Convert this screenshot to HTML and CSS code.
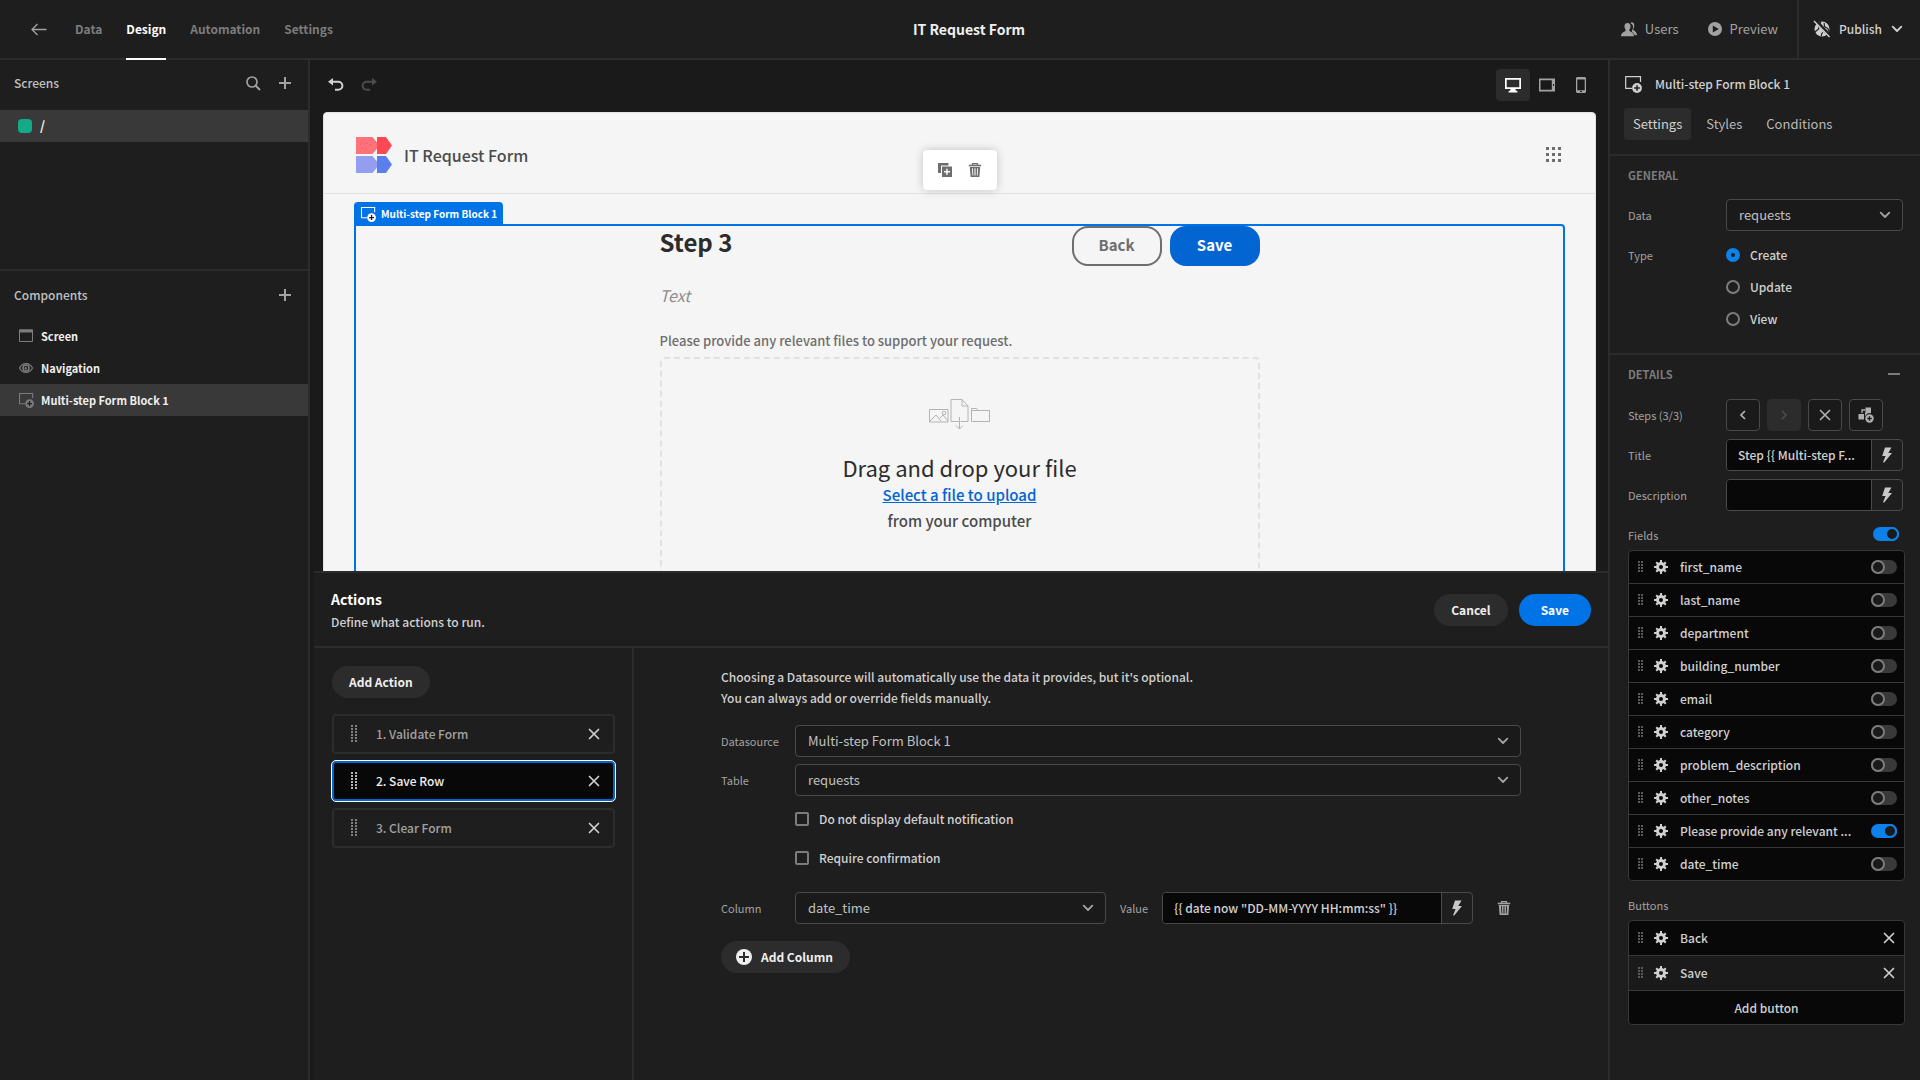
FILE: index.html
```html
<!DOCTYPE html>
<html lang="en">
<head>
<meta charset="utf-8">
<meta name="viewport" content="width=device-width, initial-scale=1">
<title>IT Request Form</title>
<link rel="stylesheet" href="styles.css">
</head>
<body>
<svg class="sprite" aria-hidden="true">
  <symbol id="i-plus" viewBox="0 0 12 12"><path d="M6 0v12M0 6h12" fill="none" stroke="currentColor" stroke-width="2"/></symbol>
  <symbol id="i-cross" viewBox="0 0 12 12"><path d="M1.500 1.500l9 9M10.500 1.500l-9 9" fill="none" stroke="currentColor" stroke-width="1.700" stroke-linecap="round"/></symbol>
  <symbol id="i-chevron" viewBox="0 0 12 8"><path d="M1.700 1.700L6 6l4.300-4.300" fill="none" stroke="currentColor" stroke-width="1.800" stroke-linecap="round" stroke-linejoin="round"/></symbol>
  <symbol id="i-block" viewBox="0 0 18 18"><path d="M8 13.300H1.700V1.600h14.800V7" fill="none" stroke="currentColor" stroke-width="1.200"/><circle cx="13" cy="13" r="4.900" fill="currentColor"/><path class="cut" d="M13 10.200v5.600M10.200 13h5.600" fill="none" stroke-width="1.500"/></symbol>
  <symbol id="i-gear" viewBox="0 0 14 14"><circle cx="7" cy="7" r="3.500" fill="none" stroke="currentColor" stroke-width="3"/><path d="M7 0v3M7 11v3M0 7h3M11 7h3M2.200 2.200l2 2M9.800 9.800l2 2M11.800 2.200l-2 2M4.200 9.800l-2 2" fill="none" stroke="currentColor" stroke-width="2"/></symbol>
  <symbol id="i-grip" viewBox="0 0 6 12"><path d="M0 1h2M3 1h2M0 4h2M3 4h2M0 7h2M3 7h2M0 10h2M3 10h2" fill="none" stroke="currentColor" stroke-width="2"/></symbol>
  <symbol id="i-grip-tall" viewBox="0 0 6 18"><path d="M0 1h2M4 1h2M0 4h2M4 4h2M0 7h2M4 7h2M0 10h2M4 10h2M0 13h2M4 13h2M0 16h2M4 16h2" fill="none" stroke="currentColor" stroke-width="1.500"/></symbol>
  <symbol id="i-bolt" viewBox="0 0 10 16"><path d="M3 .5h6.500L6.300 6H10L2.200 15.600 1 15.200 3.600 9H.2z" fill="currentColor"/></symbol>
  <symbol id="i-trash" viewBox="0 0 14 14"><path d="M4.500 2V.7h5V2" fill="none" stroke="currentColor" stroke-width="1.200"/><path d="M.8 1.700h12.400v1.600H.8z" fill="currentColor"/><path fill-rule="evenodd" d="M1.800 4h10.400l-.8 10H2.600zM4 5.300l.5 7.200h.8l-.4-7.200zM6.500 5.300v7.200h1V5.300zM9.200 5.300l-.4 7.200h.8l.5-7.200z" fill="currentColor"/></symbol>
  <symbol id="i-undo" viewBox="0 0 16 13"><path d="M4 3.700h6.200a4.200 4 0 0 1 0 8H7" fill="none" stroke="currentColor" stroke-width="2"/><path d="M0 3.700L5 0v7.500z" fill="currentColor"/></symbol>
</svg>

<header class="topbar">
  <nav class="topnav" aria-label="App">
    <a class="back" href="#" aria-label="Back to apps"><svg width="16" height="13" viewBox="0 0 16 13"><path d="M15.500 6.500H1M6.500 1L1 6.500 6.500 12" fill="none" stroke="currentColor" stroke-width="1.300"/></svg></a>
    <a href="#">Data</a>
    <a href="#" class="active" aria-current="page">Design</a>
    <a href="#">Automation</a>
    <a href="#">Settings</a>
  </nav>
  <h1>IT Request Form</h1>
  <div class="topactions">
    <button type="button"><svg width="16" height="15" viewBox="0 0 16 15"><path d="M9.500 1.200C10 .4 10.800.2 11.500.4c1.500.4 2 1.700 1.700 3.800-.2 1.600-.9 2.400-1 3.400 0 1.200 3.800 1.600 3.800 5.600h-2.200c-.5-2.200-3-2.700-3-4 0-1 1.100-1.700 1.300-4 .1-1.900-.8-3.300-2.600-4z" fill="currentColor"/><path d="M6.500 1c2 0 3.200 1.400 3 3.700-.1 1.800-1.100 2.500-1.200 3.600C8.200 9.800 13 10 13 14.200H0C0 10 4.800 9.800 4.700 8.300 4.600 7.200 3.600 6.500 3.500 4.700 3.300 2.400 4.500 1 6.500 1z" fill="currentColor"/></svg>Users</button>
    <button type="button"><svg width="14" height="14" viewBox="0 0 14 14"><path fill-rule="evenodd" d="M7 0a7 7 0 1 1 0 14A7 7 0 0 1 7 0zM4.800 3.400v7.200L10.800 7z" fill="currentColor"/></svg>Preview</button>
    <button type="button" class="publish"><svg width="18" height="18" viewBox="0 0 18 18"><circle cx="9" cy="9" r="7.500" fill="currentColor"/><path d="M8 1.500C6 5 6.500 8 5 9.500S2 11 1.500 13M11 3c1 2-1 3.500 2 4.500s3 3 1.500 5M8 16c1-1 0-3 2-3.500" fill="none" stroke="#1e1e1e" stroke-width="1.200"/><path d="M2.500.5l15 16" stroke="#1e1e1e" stroke-width="3.500"/><path d="M1 1l15.500 16" stroke="currentColor" stroke-width="1.500"/></svg>Publish<svg class="chev" width="12" height="8"><use href="#i-chevron"/></svg></button>
  </div>
</header>

<div class="workspace">
  <aside class="left">
    <section class="screens">
      <div class="panelhead"><h2>Screens</h2>
        <button type="button" aria-label="Search screens"><svg width="15" height="15" viewBox="0 0 15 15"><circle cx="6" cy="6" r="5" fill="none" stroke="currentColor" stroke-width="1.700"/><path d="M9.500 9.500l4.500 4.500" stroke="currentColor" stroke-width="2"/></svg></button>
        <button type="button" aria-label="Add screen"><svg width="12" height="12"><use href="#i-plus"/></svg></button>
      </div>
      <a class="navitem screenitem selected" href="#"><span class="role"></span>/</a>
    </section>
    <section class="components">
      <div class="panelhead"><h2>Components</h2>
        <button type="button" aria-label="Add component"><svg width="12" height="12"><use href="#i-plus"/></svg></button>
      </div>
      <a class="navitem" href="#"><svg width="16" height="14" viewBox="0 0 16 14"><path d="M1.500 1h13v11.500h-13z" fill="none" stroke="currentColor"/><path d="M1 .5h14v3H1z" fill="currentColor"/></svg>Screen</a>
      <a class="navitem" href="#"><svg width="16" height="14" viewBox="0 0 16 14"><path d="M1.500 7C3 4 5.300 2.600 8 2.600S13 4 14.500 7C13 10 10.700 11.400 8 11.400S3 10 1.500 7z" fill="none" stroke="currentColor" stroke-width="1.200"/><circle cx="8" cy="7" r="3" fill="none" stroke="currentColor" stroke-width="1.600"/><circle cx="7.800" cy="7.200" r="1.200" fill="currentColor"/></svg>Navigation</a>
      <a class="navitem selected" href="#"><svg width="16" height="16"><use href="#i-block"/></svg>Multi-step Form Block 1</a>
    </section>
  </aside>

  <main class="center">
    <div class="toolbar">
      <button type="button" aria-label="Undo"><svg width="16" height="13"><use href="#i-undo"/></svg></button>
      <button type="button" aria-label="Redo" disabled><svg class="flip" width="16" height="13"><use href="#i-undo"/></svg></button>
      <div class="devices">
        <button type="button" class="on" aria-label="Desktop"><svg width="16" height="16" viewBox="0 0 16 16"><path fill-rule="evenodd" d="M0 1h16v11h-5.500v1l2 1.500V15.500h-9v-1l2-1.500v-1H0zM1.700 2.700v7.600h12.600V2.700z" fill="currentColor"/></svg></button>
        <button type="button" aria-label="Tablet"><svg width="16" height="14" viewBox="0 0 16 14"><path fill-rule="evenodd" d="M0 .5h16v13H0zM1.500 2.300v9.400h11.300V2.300zM14 6v2h1V6z" fill="currentColor"/></svg></button>
        <button type="button" aria-label="Mobile"><svg width="10" height="16" viewBox="0 0 10 16"><path fill-rule="evenodd" d="M1 0h8l1 1v14l-1 1H1l-1-1V1zM1.300 2.500v10.700h7.400V2.500zM4 14v1h2v-1z" fill="currentColor"/></svg></button>
      </div>
    </div>

    <div class="preview">
      <div class="app">
        <div class="apphead">
          <svg width="36" height="36" viewBox="0 0 36 36"><path d="M0 0h16.500l5 6v5l-5 6H0z" fill="#ff7279"/><path d="M21 0h9l6 8.500-6 8.500h-9z" fill="#ff4855"/><path d="M0 19h16.500l5 6v5l-5 6H0z" fill="#939ef0"/><path d="M21 19h9l6 8.500-6 8.500h-9z" fill="#5a7eea"/><path d="M4 7h1M10 6h1M14 8h1M6 11h1M10 12h1" stroke="#ff4855"/></svg>
          <strong>IT Request Form</strong>
          <button type="button" aria-label="Apps"><svg width="15" height="15" viewBox="0 0 15 15"><path d="M0 1.500h15M0 7.500h15M0 13.500h15" stroke="currentColor" stroke-width="3" stroke-dasharray="3 3"/></svg></button>
        </div>
        <div class="floating">
          <button type="button" aria-label="Duplicate"><svg width="14" height="14" viewBox="0 0 14 14"><path d="M0 0h10.500v2.500H3V10H0z" fill="currentColor"/><path fill-rule="evenodd" d="M4 3.500h10V14H4zM8.200 5.700V8H6v1.500h2.200v2.300h1.500V9.500H12V8H9.700V5.700z" fill="currentColor"/></svg></button>
          <button type="button" aria-label="Delete"><svg width="14" height="14"><use href="#i-trash"/></svg></button>
        </div>
        <div class="block">
          <div class="blocktag"><svg width="16" height="16"><use href="#i-block"/></svg>Multi-step Form Block 1</div>
          <form class="form">
            <div class="formhead">
              <h2>Step 3</h2>
              <button type="button" class="outline">Back</button>
              <button type="button" class="solid">Save</button>
            </div>
            <p class="placeholder">Text</p>
            <p class="fieldlabel">Please provide any relevant files to support your request.</p>
            <div class="dropzone">
              <svg width="62" height="31" viewBox="0 0 62 31" fill="none" stroke="#b3b3b3"><path d="M.5 10.500h18.500v12.500H.5zM1 22l6-6 5 6M11 19l3-3 5 6"/><circle cx="15" cy="14" r="1.800"/><path d="M29.500 22.500h-7.500V.5h11l6 6.500v15.500h-7.500M33 .5V7h6M30.500 18v12M27 26.500l3.500 3.500 3.500-3.500"/><path d="M42.500 22.500v-13h5l1.500 2h11.500v11zM42.500 11.500H49"/></svg>
              <h3>Drag and drop your file</h3>
              <a href="#">Select a file to upload</a>
              <span>from your computer</span>
            </div>
          </form>
        </div>
      </div>
    </div>

    <section class="drawer">
      <div class="drawerhead">
        <div><h2>Actions</h2><p>Define what actions to run.</p></div>
        <button type="button" class="pill">Cancel</button>
        <button type="button" class="pill primary">Save</button>
      </div>
      <div class="drawerbody">
        <div class="actionlist">
          <button type="button" class="pill">Add Action</button>
          <ol>
            <li><svg width="6" height="18"><use href="#i-grip-tall"/></svg><span>1. Validate Form</span><button type="button" aria-label="Remove Validate Form"><svg width="12" height="12"><use href="#i-cross"/></svg></button></li>
            <li class="current"><svg width="6" height="18"><use href="#i-grip-tall"/></svg><span>2. Save Row</span><button type="button" aria-label="Remove Save Row"><svg width="12" height="12"><use href="#i-cross"/></svg></button></li>
            <li><svg width="6" height="18"><use href="#i-grip-tall"/></svg><span>3. Clear Form</span><button type="button" aria-label="Remove Clear Form"><svg width="12" height="12"><use href="#i-cross"/></svg></button></li>
          </ol>
        </div>
        <form class="actionform">
          <p>Choosing a Datasource will automatically use the data it provides, but it's optional.<br>You can always add or override fields manually.</p>
          <div class="params">
            <label for="ds">Datasource</label>
            <div class="select"><select id="ds"><option>Multi-step Form Block 1</option></select><svg width="12" height="8"><use href="#i-chevron"/></svg></div>
            <label for="table">Table</label>
            <div class="select"><select id="table"><option>requests</option></select><svg width="12" height="8"><use href="#i-chevron"/></svg></div>
            <label class="check"><input type="checkbox">Do not display default notification</label>
            <label class="check"><input type="checkbox">Require confirmation</label>
          </div>
          <div class="columnrow">
            <label for="col">Column</label>
            <div class="select"><select id="col"><option>date_time</option></select><svg width="12" height="8"><use href="#i-chevron"/></svg></div>
            <label for="val">Value</label>
            <div class="bound"><input id="val" type="text" value="{{ date now &quot;DD-MM-YYYY HH:mm:ss&quot; }}"><button type="button" aria-label="Bind value"><svg width="10" height="16"><use href="#i-bolt"/></svg></button></div>
            <button type="button" class="icon" aria-label="Delete column"><svg width="14" height="14"><use href="#i-trash"/></svg></button>
          </div>
          <button type="button" class="pill withicon"><svg width="16" height="16" viewBox="0 0 16 16"><circle cx="8" cy="8" r="8" fill="currentColor"/><path d="M8 3v10M3 8h10" stroke="#2c2c2c" stroke-width="2"/></svg>Add Column</button>
        </form>
      </div>
    </section>
  </main>

  <aside class="right">
    <div class="inspecthead">
      <div class="inspecttitle"><svg width="18" height="18"><use href="#i-block"/></svg><h2>Multi-step Form Block 1</h2></div>
      <div class="tabs"><button type="button" class="on">Settings</button><button type="button">Styles</button><button type="button">Conditions</button></div>
    </div>
    <section class="group general">
      <h3>GENERAL</h3>
      <div class="prop"><label for="data">Data</label><div class="select"><select id="data"><option>requests</option></select><svg width="12" height="8"><use href="#i-chevron"/></svg></div></div>
      <div class="prop top" role="radiogroup" aria-labelledby="type"><span class="lbl" id="type">Type</span>
        <div class="radios">
          <label><input type="radio" name="type" checked>Create</label>
          <label><input type="radio" name="type">Update</label>
          <label><input type="radio" name="type">View</label>
        </div>
      </div>
    </section>
    <section class="group details">
      <div class="grouphead"><h3>DETAILS</h3><button type="button" aria-label="Collapse details"><svg width="12" height="2" viewBox="0 0 12 2"><path d="M0 1h12" stroke="currentColor" stroke-width="2"/></svg></button></div>
      <div class="prop"><span class="lbl">Steps (3/3)</span>
        <div class="steps">
          <button type="button" aria-label="Previous step"><svg width="6" height="10" viewBox="0 0 6 10"><path d="M5 1L1 5l4 4" fill="none" stroke="currentColor" stroke-width="1.700"/></svg></button>
          <button type="button" aria-label="Next step" disabled><svg width="6" height="10" viewBox="0 0 6 10"><path d="M1 1l4 4-4 4" fill="none" stroke="currentColor" stroke-width="1.700"/></svg></button>
          <button type="button" aria-label="Delete step"><svg width="12" height="12"><use href="#i-cross"/></svg></button>
          <button type="button" aria-label="Add step"><svg width="16" height="16" viewBox="0 0 16 16"><path d="M.5 7H6v5.500H.5z" fill="currentColor"/><path d="M4 6V3h3.500" fill="none" stroke="currentColor" stroke-width="1.300"/><path d="M7.500.5H13v5.700c-2.500-.4-5 .8-6 3.300V5.500h.5z" fill="currentColor"/><circle cx="11.500" cy="11.500" r="4.200" fill="currentColor"/><path d="M11.500 9.300v4.400M9.300 11.500h4.400" stroke="#1a1a1a" stroke-width="1.300"/></svg></button>
        </div>
      </div>
      <div class="prop"><label for="title">Title</label><div class="bound"><input id="title" type="text" value="Step {{ Multi-step F..."><button type="button" aria-label="Bind title"><svg width="10" height="16"><use href="#i-bolt"/></svg></button></div></div>
      <div class="prop"><label for="desc">Description</label><div class="bound"><input id="desc" type="text"><button type="button" aria-label="Bind description"><svg width="10" height="16"><use href="#i-bolt"/></svg></button></div></div>
      <div class="listhead"><label for="fields">Fields</label><input id="fields" class="switch" type="checkbox" role="switch" checked></div>
      <ul class="rows">
        <li><svg class="grip" width="6" height="12"><use href="#i-grip"/></svg><svg width="14" height="14"><use href="#i-gear"/></svg><label for="f1">first_name</label><input id="f1" class="switch" type="checkbox" role="switch"></li>
        <li><svg class="grip" width="6" height="12"><use href="#i-grip"/></svg><svg width="14" height="14"><use href="#i-gear"/></svg><label for="f2">last_name</label><input id="f2" class="switch" type="checkbox" role="switch"></li>
        <li><svg class="grip" width="6" height="12"><use href="#i-grip"/></svg><svg width="14" height="14"><use href="#i-gear"/></svg><label for="f3">department</label><input id="f3" class="switch" type="checkbox" role="switch"></li>
        <li><svg class="grip" width="6" height="12"><use href="#i-grip"/></svg><svg width="14" height="14"><use href="#i-gear"/></svg><label for="f4">building_number</label><input id="f4" class="switch" type="checkbox" role="switch"></li>
        <li><svg class="grip" width="6" height="12"><use href="#i-grip"/></svg><svg width="14" height="14"><use href="#i-gear"/></svg><label for="f5">email</label><input id="f5" class="switch" type="checkbox" role="switch"></li>
        <li><svg class="grip" width="6" height="12"><use href="#i-grip"/></svg><svg width="14" height="14"><use href="#i-gear"/></svg><label for="f6">category</label><input id="f6" class="switch" type="checkbox" role="switch"></li>
        <li><svg class="grip" width="6" height="12"><use href="#i-grip"/></svg><svg width="14" height="14"><use href="#i-gear"/></svg><label for="f7">problem_description</label><input id="f7" class="switch" type="checkbox" role="switch"></li>
        <li><svg class="grip" width="6" height="12"><use href="#i-grip"/></svg><svg width="14" height="14"><use href="#i-gear"/></svg><label for="f8">other_notes</label><input id="f8" class="switch" type="checkbox" role="switch"></li>
        <li><svg class="grip" width="6" height="12"><use href="#i-grip"/></svg><svg width="14" height="14"><use href="#i-gear"/></svg><label for="f9">Please provide any relevant ...</label><input id="f9" class="switch" type="checkbox" role="switch" checked></li>
        <li><svg class="grip" width="6" height="12"><use href="#i-grip"/></svg><svg width="14" height="14"><use href="#i-gear"/></svg><label for="f10">date_time</label><input id="f10" class="switch" type="checkbox" role="switch"></li>
      </ul>
      <div class="listhead"><span class="lbl">Buttons</span></div>
      <ul class="rows tall">
        <li><svg class="grip" width="6" height="12"><use href="#i-grip"/></svg><svg width="14" height="14"><use href="#i-gear"/></svg><span>Back</span><button type="button" aria-label="Remove Back"><svg width="12" height="12"><use href="#i-cross"/></svg></button></li>
        <li class="hover"><svg class="grip" width="6" height="12"><use href="#i-grip"/></svg><svg width="14" height="14"><use href="#i-gear"/></svg><span>Save</span><button type="button" aria-label="Remove Save"><svg width="12" height="12"><use href="#i-cross"/></svg></button></li>
        <li class="add"><button type="button">Add button</button></li>
      </ul>
    </section>
  </aside>
</div>
</body>
</html>
```

FILE: styles.css
```css
:root {
  --bg: #1e1e1e;
  --deep: #1a1a1a;
  --well: #080808;
  --line: #2c2c2c;
  --edge: #4a4a4a;
  --text: #d0d0d0;
  --muted: #a2a2a2;
  --dim: #7c7c7c;
  --bright: #efefef;
  --blue: #0073e6;
}
*, *::before, *::after { box-sizing: border-box; }
body {
  margin: 0;
  height: 100vh;
  display: flex;
  flex-direction: column;
  overflow: hidden;
  background: var(--bg);
  color: var(--text);
  font: 500 12px/20px "Noto Sans CJK SC", "Noto Sans", sans-serif;
}
h1, h2, h3, p, ul, ol { margin: 0; padding: 0; font-weight: inherit; font-size: inherit; }
ul, ol { list-style: none; }
button, input, select { font: inherit; color: inherit; margin: 0; }
button { background: none; border: 0; padding: 0; display: inline-flex; align-items: center; justify-content: center; cursor: pointer; }
a { color: inherit; text-decoration: none; }
svg { flex: none; display: block; }
.sprite { position: absolute; width: 0; height: 0; }
.cut { stroke: var(--bg); }

/* Top bar */
.topbar {
  flex: none;
  height: 60px;
  display: grid;
  grid-template-columns: 1fr auto 1fr;
  border-bottom: 2px solid var(--line);
  padding-left: 18px;
}
.topnav { display: flex; gap: 24px; color: var(--dim); font-weight: 700; }
.topnav a { display: flex; align-items: center; margin-bottom: -2px; border-bottom: 2px solid transparent; }
.topnav .back { color: var(--muted); margin: 0 4px -2px 13px; }
.topnav .active { color: #fff; border-color: #fff; }
.topbar h1 { font-weight: 700; font-size: 14px; line-height: 58px; color: var(--bright); }
.topactions { display: flex; justify-content: flex-end; }
.topactions button { gap: 8px; margin-right: 29px; color: var(--muted); font-size: 13px; font-weight: 400; }
.topactions button:nth-child(2) { margin-right: 19px; }
.topactions .publish { margin: 0; padding: 0 17px 0 14px; border-left: 2px solid var(--line); font-size: 12px; font-weight: 500; color: var(--text); }
.chev { margin-left: 1px; }

.workspace { flex: 1; min-height: 0; display: grid; grid-template-columns: 310px minmax(0, 1fr) 312px; }

/* Left panel */
.left { border-right: 2px solid var(--line); }
.screens { height: 211px; border-bottom: 2px solid var(--line); }
.panelhead { height: 50px; display: flex; align-items: center; gap: 18px; padding: 0 17px 4px 14px; color: var(--muted); }
.components .panelhead { height: 49px; padding-bottom: 2px; }
.panelhead h2 { flex: 1; color: #c0c0c0; }
.navitem { height: 32px; display: flex; align-items: center; gap: 7px; padding: 0 18px; font-size: 11px; font-weight: 700; color: var(--bright); }
.navitem svg { color: var(--dim); }
.navitem.selected { background: #393939; }
.navitem .cut { stroke: #393939; }
.screenitem { gap: 8px; font-size: 13px; }
.role { width: 14px; height: 14px; border-radius: 4px; background: #13aa85; }

/* Center */
.center { display: flex; flex-direction: column; min-height: 0; background: var(--deep); }
.toolbar { flex: none; height: 52px; display: flex; align-items: center; gap: 17px; padding: 0 10px 4px 18px; }
.toolbar button:disabled { color: #4c4c4c; }
.flip { transform: scaleX(-1); }
.devices { margin: 2px 0 0 auto; display: flex; color: var(--muted); }
.devices button { width: 34px; height: 32px; border-radius: 4px; }
.devices .on { background: #2c2c2c; color: #fff; }
.preview { flex: 459 1 0; min-height: 0; overflow: hidden; padding: 0 12px 0 13px; }
.app { position: relative; height: 800px; background: #f5f5f5; border: 1px solid #e1e1e1; border-radius: 4px; color: #4b4b4b; }
.apphead { height: 81px; display: flex; align-items: center; gap: 12px; padding: 3px 34px 0 32px; border-bottom: 1px solid #e1e1e1; }
.apphead strong { flex: 1; font-size: 16px; font-weight: 500; }
.apphead button { color: #6e6e6e; }
.floating {
  position: absolute; top: 37px; left: 50%; transform: translateX(-50%);
  width: 74px; height: 40px; display: flex; justify-content: center; gap: 16px;
  background: #fff; border-radius: 4px; box-shadow: 0 0 10px rgba(0, 0, 0, .2); color: #6e6e6e;
}
.block { position: relative; height: 700px; margin: 30px 30px 0; border: 2px solid var(--blue); border-radius: 4px; border-top-left-radius: 0; }
.blocktag {
  position: absolute; left: -2px; bottom: 100%; height: 24px; display: flex; align-items: center; gap: 5px; padding: 0 6px 0 6px;
  background: var(--blue); color: #fff; border-radius: 4px 4px 0 0; font-size: 10px; font-weight: 700; white-space: nowrap;
}
.blocktag .cut { stroke: var(--blue); }
.form { width: 600px; max-width: 100%; margin: 0 auto; }
.formhead { display: flex; gap: 8px; }
.formhead h2 { flex: 1; font-size: 24px; line-height: 32px; font-weight: 700; color: #2c2c2c; }
.formhead button { width: 90px; height: 40px; border-radius: 16px; font-size: 15px; line-height: 20px; padding-bottom: 2px; font-weight: 700; }
.outline { border: 2px solid #6e6e6e; color: #6e6e6e; }
.solid { background: #0265d2; color: #fff; }
.placeholder { margin-top: 18px; font-size: 16px; line-height: 22px; font-style: italic; font-weight: 400; color: #8e8e8e; }
.fieldlabel { margin-top: 23px; font-size: 13px; line-height: 24px; color: #6e6e6e; }
.dropzone { height: 260px; margin-top: 4px; display: flex; flex-direction: column; align-items: center; border: 2px dashed #e1e1e1; border-radius: 4px; padding-top: 40px; font-size: 15px; line-height: 26px; }
.dropzone h3 { margin-top: 22px; font-size: 22px; line-height: 30px; font-weight: 400; color: #2c2c2c; }
.dropzone a { color: #0265d2; text-decoration: underline; }

/* Drawer */
.drawer { flex: 507 1 0; min-height: 0; display: flex; flex-direction: column; margin-left: 4px; background: var(--bg); border-top: 2px solid var(--line); }
.drawerhead { flex: none; height: 75px; display: flex; align-items: center; gap: 11px; padding: 0 17px; border-bottom: 2px solid var(--line); }
.drawerhead div { flex: 1; padding-bottom: 2px; }
.drawerhead h2 { font-size: 14px; line-height: 26px; font-weight: 700; color: #fff; }
.pill { height: 32px; padding: 0 17px; border-radius: 16px; background: #2c2c2c; color: var(--bright); font-weight: 700; }
.pill.primary { background: var(--blue); color: #fff; padding: 0 22px; }
.withicon { gap: 9px; padding: 0 17px 0 15px; }
.drawerbody { flex: 1; display: grid; grid-template-columns: 320px minmax(0, 1fr); }
.actionlist { padding: 18px 17px 0 18px; border-right: 2px solid var(--line); }
.actionlist ol { margin-top: 16px; display: grid; gap: 7px; }
.actionlist li { height: 40px; display: flex; align-items: center; gap: 19px; padding: 0 13px 0 17px; border: 2px solid #2c2c2c; border-radius: 4px; color: var(--muted); }
.actionlist li span { flex: 1; }
.actionlist li button { color: var(--text); }
.actionlist .current { background: var(--well); border-color: #0265d2; outline: 1px solid #fff; color: var(--bright); }
.actionform { width: 800px; max-width: 100%; margin: 0 auto; padding-top: 18px; }
.actionform p { line-height: 21px; }
.params { margin-top: 17px; display: grid; grid-template-columns: 60px 1fr; gap: 7px 14px; align-items: center; }
.params label, .columnrow label, .prop > label, .lbl, .listhead label { font-size: 11px; color: var(--muted); font-weight: 400; }
.params .check { grid-column: 2; height: 32px; display: flex; align-items: center; gap: 10px; font-size: 12px; font-weight: 500; color: var(--text); }
.check input { appearance: none; width: 14px; height: 14px; border: 2px solid #7c7c7c; border-radius: 2px; }
.select { display: grid; align-items: center; min-width: 0; }
.select select { grid-area: 1 / 1; appearance: none; width: 100%; height: 32px; padding: 0 32px 0 12px; border: 1px solid var(--edge); border-radius: 4px; background: var(--deep); font-size: 13px; font-weight: 400; color: #c0c0c0; }
.select svg { grid-area: 1 / 1; justify-self: end; margin-right: 12px; color: var(--muted); pointer-events: none; }
.columnrow { margin: 18px 0 17px; display: grid; grid-template-columns: 60px minmax(0, 1fr) 28px minmax(0, 1fr) 34px; gap: 14px; align-items: center; }
.icon { color: var(--muted); }
.bound { display: flex; height: 32px; border: 1px solid var(--edge); border-radius: 4px; overflow: hidden; min-width: 0; }
.bound input { flex: 1; min-width: 0; padding: 0 11px; border: 0; background: var(--well); }
.bound button { width: 31px; border-left: 1px solid var(--edge); color: #c8c8c8; }

/* Right panel */
.right { border-left: 2px solid var(--line); }
.inspecthead { height: 96px; padding: 12px 14px 0; border-bottom: 2px solid var(--line); }
.inspecttitle { display: flex; align-items: center; gap: 13px; height: 24px; margin-bottom: 12px; }
.tabs { display: flex; gap: 6px; color: #b8b8b8; }
.tabs button { height: 32px; padding: 0 9px; border-radius: 4px; font-size: 13px; font-weight: 400; }
.tabs .on { background: #2c2c2c; color: var(--text); }
.group { padding: 0 15px 0 18px; }
.group h3 { font-size: 11px; font-weight: 700; line-height: 20px; color: var(--dim); }
.general { padding-top: 9px; height: 199px; border-bottom: 2px solid var(--line); }
.details { padding-top: 9px; }
.grouphead { display: flex; justify-content: space-between; align-items: center; padding-right: 5px; color: var(--dim); }
.prop { display: grid; grid-template-columns: 98px 177px; align-items: center; margin-bottom: 8px; }
.prop.top { align-items: start; }
.prop.top .lbl { line-height: 32px; }
.general h3 { margin-bottom: 14px; }
.grouphead { margin-bottom: 15px; }
.radios label { height: 32px; display: flex; align-items: center; gap: 10px; }
.radios input { appearance: none; width: 14px; height: 14px; border: 2px solid #7c7c7c; border-radius: 50%; }
.radios input:checked { border: 5px solid #0d80ea; }
.steps { display: flex; gap: 7px; }
.steps button { width: 34px; height: 32px; border: 1px solid var(--edge); border-radius: 4px; background: var(--deep); color: #b0b0b0; }
.steps button:disabled { background: #2c2c2c; border-color: #2c2c2c; color: #4c4c4c; }
.listhead { height: 31px; display: flex; align-items: center; justify-content: space-between; padding: 0 6px 0 0; }
.listhead .switch { margin-top: -2px; }
.rows { width: 277px; border: 1px solid #383838; border-radius: 4px; background: var(--well); overflow: hidden; margin-bottom: 8px; }
.rows li { height: 33px; display: flex; align-items: center; padding: 0 7px 0 9px; border-bottom: 1px solid #383838; }
.rows li:last-child { height: 32px; border: 0; }
.rows li > label, .rows li > span { flex: 1; min-width: 0; margin: 0 8px 0 12px; overflow: hidden; white-space: nowrap; }
.rows li > svg { color: var(--text); }
.rows li > .grip { margin-right: 10px; color: #5a5a5a; }
.rows.tall li { height: 35px; padding-right: 9px; }
.rows.tall li:last-child { height: 33px; }
.rows .hover { background: var(--deep); }
.rows .add button { flex: 1; }
.switch { appearance: none; flex: none; width: 26px; height: 14px; border-radius: 7px; background: #393939; display: flex; }
.switch::before { content: ""; width: 14px; height: 14px; border: 2px solid #7c7c7c; border-radius: 50%; background: var(--deep); }
.switch:checked { background: #0d80ea; justify-content: flex-end; }
.switch:checked::before { border-color: #0d80ea; }
```
